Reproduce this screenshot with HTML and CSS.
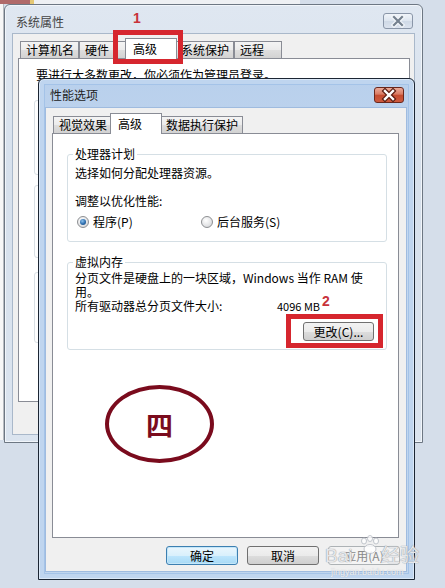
FILE: index.html
```html
<!DOCTYPE html>
<html lang="zh-CN">
<head>
    <meta charset="UTF-8">
    <meta name="viewport" content="width=device-width, initial-scale=1.0">
    <title>性能选项</title>
    <link rel="stylesheet" href="styles.css">
</head>
<body>
    <div class="desktop">
        <div class="edge-top"></div>
        <div class="edge-left"></div>

        <!-- 系统属性: the window behind -->
        <div class="window window-back">
            <div class="titlebar">
                <span class="title">系统属性</span>
                <span class="close close-off">
                    <svg width="28" height="14" viewBox="0 0 28 14">
                        <path d="M10 3 L18 11 M18 3 L10 11" stroke="#f4f7fb" stroke-width="4.5" stroke-linecap="square"/>
                        <path d="M10 3 L18 11 M18 3 L10 11" stroke="#75818f" stroke-width="2.2" stroke-linecap="square"/>
                    </svg>
                </span>
            </div>
            <div class="client client-back">
                <div class="tabs">
                    <span class="tab">计算机名</span>
                    <span class="tab tab-short">硬件</span>
                    <span class="tab tab-on">高级</span>
                    <span class="tab">系统保护</span>
                    <span class="tab tab-short">远程</span>
                </div>
                <div class="panel panel-back">
                    <p class="note">要进行大多数更改，你必须作为管理员登录。</p>
                    <div class="old-group group-a"></div>
                    <div class="old-group group-b"></div>
                    <div class="old-group group-c"></div>
                </div>
            </div>
        </div>

        <div class="callout callout-tab"></div>
        <span class="step step-1">1</span>

        <!-- 性能选项: the active dialog -->
        <div class="window window-front">
            <div class="titlebar">
                <span class="title">性能选项</span>
                <span class="close close-on">
                    <svg width="28" height="14" viewBox="0 0 28 14">
                        <path d="M10 3 L18 11 M18 3 L10 11" stroke="#5b1d12" stroke-width="4.8" stroke-linecap="square"/>
                        <path d="M10 3 L18 11 M18 3 L10 11" stroke="#ffffff" stroke-width="2.4" stroke-linecap="square"/>
                    </svg>
                </span>
            </div>
            <div class="client client-front">
                <div class="tabs tabs-front">
                    <span class="tab">视觉效果</span>
                    <span class="tab tab-on">高级</span>
                    <span class="tab">数据执行保护</span>
                </div>
                <div class="panel panel-front">
                    <fieldset class="group">
                        <legend>处理器计划</legend>
                        <p class="line first">选择如何分配处理器资源。</p>
                        <p class="line gap">调整以优化性能:</p>
                        <div class="radios">
                            <label class="radio-opt"><span class="radio radio-on"></span>程序(P)</label>
                            <label class="radio-opt"><span class="radio"></span>后台服务(S)</label>
                        </div>
                    </fieldset>
                    <fieldset class="group group-vm">
                        <legend>虚拟内存</legend>
                        <p class="desc">分页文件是硬盘上的一块区域，Windows 当作 RAM 使<br>用。</p>
                        <div class="size-row">
                            <span class="size-label">所有驱动器总分页文件大小:</span>
                            <span class="size-value">4096 MB</span>
                        </div>
                        <div class="change-row">
                            <button class="btn btn-change">更改(C)...</button>
                        </div>
                    </fieldset>
                </div>
                <div class="actions">
                    <button class="btn btn-default">确定</button>
                    <button class="btn">取消</button>
                    <button class="btn" disabled>应用(A)</button>
                </div>
            </div>
        </div>

        <span class="step step-2">2</span>
        <div class="callout callout-change"></div>

        <div class="ring">四</div>

        <div class="watermark">
            <span class="wm-big">Bai</span>
            <svg class="wm-paw" width="22" height="20" viewBox="0 0 22 20">
                <g fill="#ffffff" stroke="#b9bec6" stroke-width="1">
                    <ellipse cx="5" cy="6" rx="2.5" ry="3"/>
                    <ellipse cx="11" cy="3.5" rx="2.5" ry="3"/>
                    <ellipse cx="17" cy="6" rx="2.5" ry="3"/>
                    <ellipse cx="11" cy="14" rx="6" ry="4.5"/>
                </g>
            </svg>
            <span class="wm-big">经验</span>
            <span class="wm-small">jingyan.baidu.com</span>
        </div>
    </div>
</body>
</html>
```

FILE: styles.css
```css
body {
    margin: 0;
    background: #d5deea;
    font-family: "Noto Sans CJK SC", "Liberation Sans", sans-serif;
    font-size: 12px;
    color: #000;
}
p {
    margin: 0;
}
.desktop {
    position: relative;
    width: 445px;
    height: 588px;
    overflow: hidden;
}
.edge-top {
    position: absolute;
    left: 0;
    top: 0;
    width: 300px;
    height: 4px;
    background: linear-gradient(to right, #b06a6a 0 30px, #e5c874 30px 34px, #eef0f3 34px);
}
.edge-left {
    position: absolute;
    left: 0;
    top: 4px;
    width: 3px;
    height: 436px;
    background: #f7f7f7;
    border-right: 1px solid #b8bcc2;
}

/* windows */
.window {
    position: absolute;
    display: flex;
    flex-direction: column;
    box-sizing: border-box;
    border-radius: 6px 6px 0 0;
}
.window-back {
    left: 4px;
    top: 4px;
    width: 419px;
    height: 439px;
    border: 1px solid #6d7783;
    background: linear-gradient(#dfe7f1, #d6e0ec 40%, #dbe4ef);
    box-shadow: inset 0 0 0 1px #f1f5fa;
}
.window-front {
    left: 38px;
    top: 78px;
    width: 377px;
    height: 502px;
    border: 1px solid #1b2533;
    background: linear-gradient(#b9d0ec, #c4d8f0 30%, #bfd5ee);
    box-shadow: inset 0 0 0 1px #dbe8f7, inset 0 0 0 5px #bfd5ef, inset 0 0 0 6px #a4c3e8;
}
.titlebar {
    position: relative;
    height: 28px;
    flex-shrink: 0;
}
.title {
    display: block;
    padding: 8px 0 0 11px;
    line-height: 16px;
    color: #222;
}
.window-back .title {
    padding-top: 9px;
    color: #444;
}
.close {
    position: absolute;
    top: 8px;
    width: 30px;
    height: 16px;
    box-sizing: border-box;
    border-radius: 3px;
    display: flex;
    align-items: center;
    justify-content: center;
}
.close-off {
    right: 9px;
    border: 1px solid #8a96a8;
    background: linear-gradient(#f0f4f9, #dde5ef 50%, #cfd9e6 50%, #dbe3ee);
}
.close-on {
    right: 10px;
    border: 1px solid #6a271c;
    background: linear-gradient(#eba998, #d97a62 45%, #c44b30 50%, #cd5a3e);
}
.client {
    flex: 1;
    display: flex;
    flex-direction: column;
    background: #f0f0f0;
    min-height: 0;
}
.client-back {
    margin: 0 7px 7px 7px;
    padding: 4px 4px 32px 5px;
    border: 1px solid #a9b8ca;
}
.client-front {
    margin: 0 7px 7px 6px;
    padding: 5px 7px 6px 6px;
    border: 1px solid #9fbbdf;
}

/* tabs */
.tabs {
    display: flex;
    align-items: flex-end;
    height: 20px;
    margin-left: 2px;
    flex-shrink: 0;
}
.tabs-front {
    margin-left: 1px;
}
.tab {
    height: 17px;
    box-sizing: border-box;
    padding: 0 4px 0 5px;
    border: 1px solid #898c95;
    border-bottom: none;
    line-height: 16px;
    white-space: nowrap;
    background: linear-gradient(#f4f4f4, #ebebeb 50%, #dedede 50%, #d2d2d2);
}
.tab-short {
    padding-right: 17px;
}
.tab-on {
    position: relative;
    z-index: 1;
    height: 21px;
    margin: 0 -2px -1px -2px;
    padding: 2px 19px 0 7px;
    background: #fff;
}
.panel {
    flex: 1;
    background: #fff;
    border: 1px solid #898c95;
}
.panel-back {
    padding-top: 9px;
}
.note {
    margin-left: 17px;
    line-height: 14px;
    white-space: nowrap;
}
.old-group {
    margin: 0 12px 0 15px;
    border: 1px solid #d9dfe4;
    border-radius: 3px;
}
.group-a {
    margin-top: 18px;
    height: 73px;
}
.group-b {
    margin-top: 10px;
    height: 71px;
}
.group-c {
    margin-top: 14px;
    height: 69px;
}
.panel-front {
    padding: 13px 11px 0 14px;
}

/* group boxes */
.group {
    margin: 0;
    padding: 0 11px 12px 7px;
    border: 1px solid #d5dfe5;
    border-radius: 3px;
    min-width: 0;
}
.group legend {
    padding: 0 2px;
    margin-left: -2px;
    line-height: 14px;
}
.line {
    line-height: 14px;
}
.line.first {
    margin-top: 5px;
}
.line.gap {
    margin-top: 14px;
}
.radios {
    display: flex;
    margin-top: 7px;
    margin-left: 2px;
    line-height: 14px;
}
.radio-opt {
    display: flex;
    align-items: center;
    gap: 4px;
}
.radio-opt:first-child {
    width: 124px;
}
.radio {
    position: relative;
    width: 12px;
    height: 12px;
    box-sizing: border-box;
    border-radius: 50%;
    border: 1px solid #8d8f92;
    background: radial-gradient(circle at 40% 35%, #ffffff, #e2e3e5 60%, #c9cbce);
}
.radio-on::after {
    content: "";
    position: absolute;
    left: 2px;
    top: 2px;
    width: 6px;
    height: 6px;
    border-radius: 50%;
    background: radial-gradient(circle at 40% 35%, #8cc2ee, #2b6cad 55%, #17416f);
}
.group-vm {
    margin-top: 13px;
    padding-bottom: 8px;
    padding-right: 12px;
}
.desc {
    margin-top: 2px;
    line-height: 14px;
    white-space: nowrap;
}
.size-row {
    display: flex;
    line-height: 14px;
}
.size-label {
    width: 202px;
}
.size-value {
    font-size: 11px;
}
.change-row {
    display: flex;
    justify-content: flex-end;
    margin-top: 9px;
}

/* buttons */
.btn {
    width: 72px;
    height: 19px;
    box-sizing: border-box;
    padding: 0;
    border: 1px solid #707070;
    border-radius: 3px;
    background: linear-gradient(#f2f2f2, #ebebeb 50%, #dddddd 50%, #cfcfcf);
    font-family: inherit;
    font-size: 12px;
    line-height: 16px;
    color: #000;
}
.btn-change {
    width: 71px;
}
.btn-default {
    border-color: #3c7fb1;
    background: linear-gradient(#eaf6fd, #d9f0fc 50%, #bee6fd 50%, #a7d9f5);
    box-shadow: inset 0 0 0 1px #c4e6f8;
}
.btn:disabled {
    border-color: #adb2b5;
    background: #f4f4f4;
    color: #8a8a8a;
}
.actions {
    display: flex;
    justify-content: flex-end;
    gap: 9px;
    margin: 8px -1px 0 0;
    flex-shrink: 0;
}

/* annotations drawn on top of the screenshot */
.callout {
    position: absolute;
    border: 5px solid #d6262e;
    box-sizing: border-box;
}
.callout-tab {
    left: 113px;
    top: 30px;
    width: 70px;
    height: 34px;
}
.callout-change {
    left: 286px;
    top: 314px;
    width: 97px;
    height: 34px;
}
.step {
    position: absolute;
    font-family: "Liberation Sans", sans-serif;
    font-weight: bold;
    font-size: 14px;
    line-height: 14px;
    color: #c8323a;
}
.step-1 {
    left: 133px;
    top: 11px;
}
.step-2 {
    left: 322px;
    top: 294px;
}
.ring {
    position: absolute;
    left: 105px;
    top: 385px;
    width: 109px;
    height: 78px;
    box-sizing: border-box;
    border: 4px solid #7a0b1d;
    border-radius: 50%;
    display: flex;
    align-items: center;
    justify-content: center;
    font-size: 27px;
    font-weight: bold;
    color: #7a0b1d;
}
.watermark {
    position: absolute;
    left: 323px;
    top: 535px;
    width: 122px;
    height: 46px;
}
.wm-big {
    position: absolute;
    top: 10px;
    font-family: "Liberation Sans", "Noto Sans CJK SC", sans-serif;
    font-size: 19px;
    line-height: 22px;
    color: rgba(255, 255, 255, 0.75);
    text-shadow: 0 0 1px #9aa0a8, 0 0 1px #9aa0a8;
}
.wm-big:first-child {
    left: 2px;
}
.wm-big:nth-of-type(2) {
    left: 58px;
}
.wm-paw {
    position: absolute;
    left: 36px;
    top: 0;
    opacity: 0.85;
}
.wm-small {
    position: absolute;
    left: 8px;
    top: 32px;
    font-family: "Liberation Sans", sans-serif;
    font-size: 9px;
    color: rgba(255, 255, 255, 0.8);
    text-shadow: 0 0 1px #a8adb4;
}
```
